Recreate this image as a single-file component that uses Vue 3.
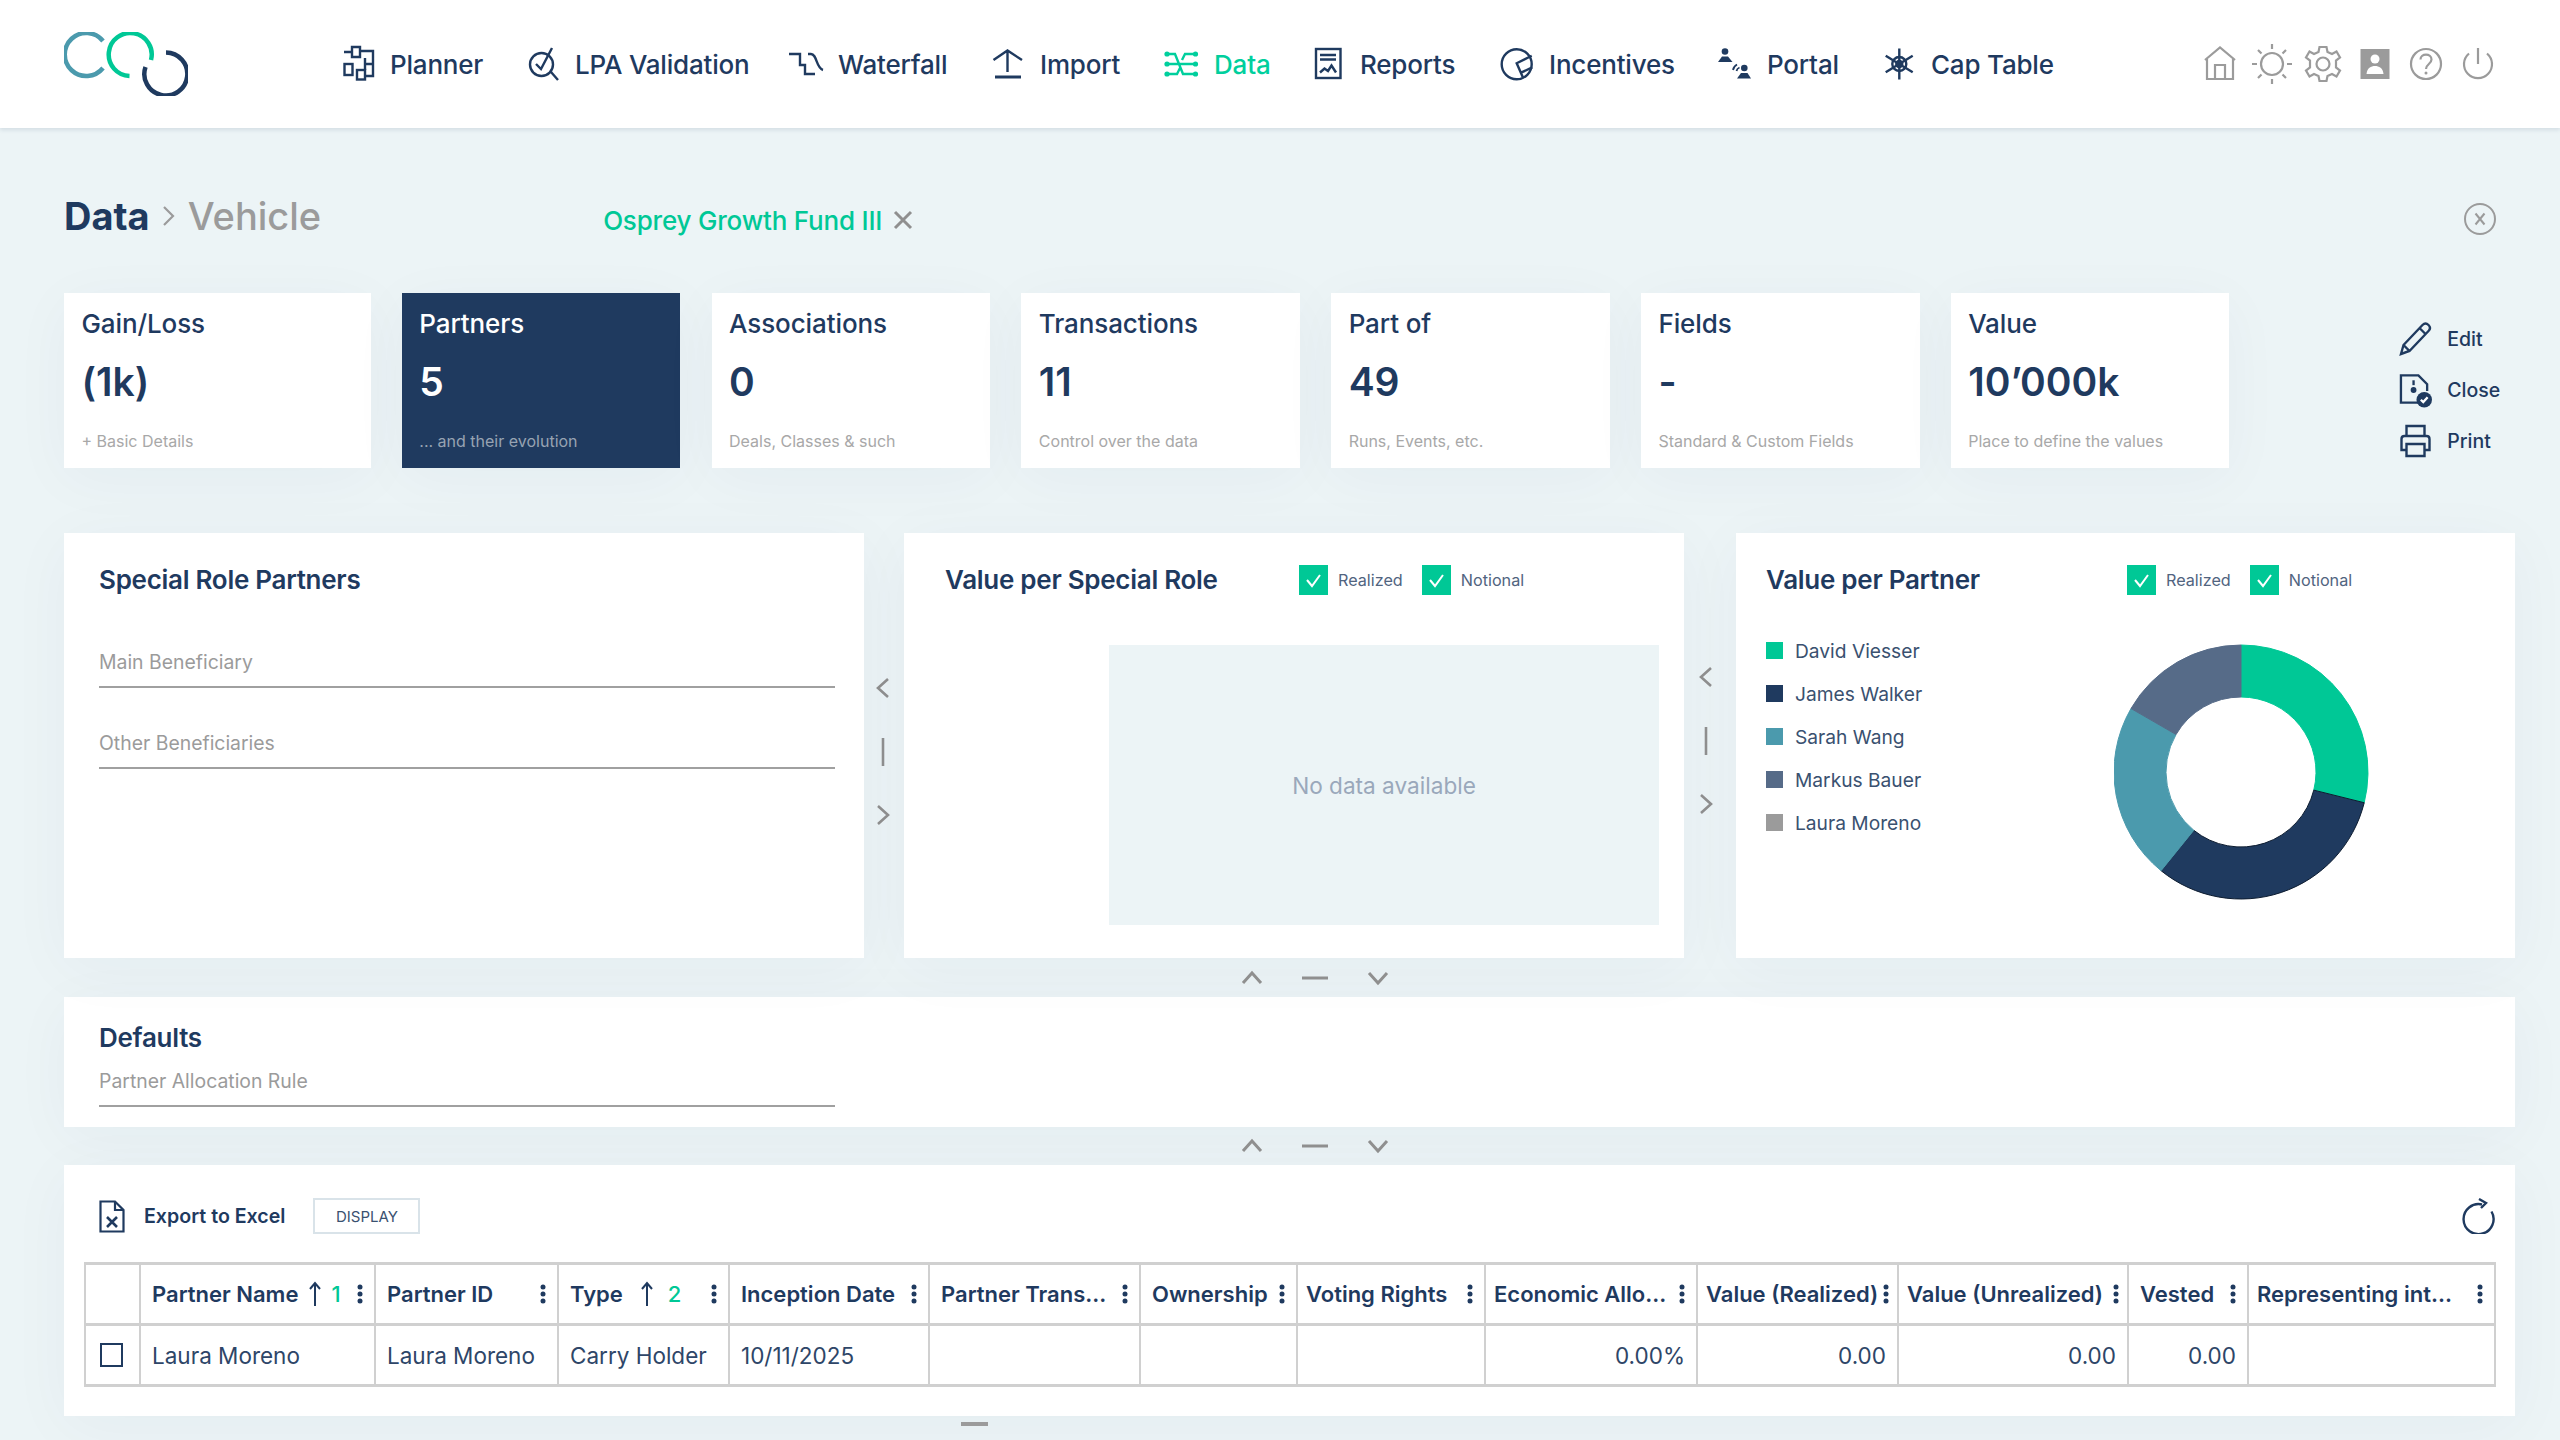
<script setup>
import { computed } from 'vue'

const navy = '#1f3a5f'

const navItems = [
  { label: 'Planner' },
  { label: 'LPA Validation' },
  { label: 'Waterfall' },
  { label: 'Import' },
  { label: 'Data', active: true },
  { label: 'Reports' },
  { label: 'Incentives' },
  { label: 'Portal' },
  { label: 'Cap Table' }
]

const kpis = [
  { title: 'Gain/Loss', value: '(1k)', sub: '+ Basic Details' },
  { title: 'Partners', value: '5', sub: '... and their evolution', active: true },
  { title: 'Associations', value: '0', sub: 'Deals, Classes & such' },
  { title: 'Transactions', value: '11', sub: 'Control over the data' },
  { title: 'Part of', value: '49', sub: 'Runs, Events, etc.' },
  { title: 'Fields', value: '-', sub: 'Standard & Custom Fields' },
  { title: 'Value', value: "10’000k", sub: 'Place to define the values' }
]

const partners = [
  { name: 'David Viesser', color: '#00c896', from: 0, to: 104 },
  { name: 'James Walker', color: navy, from: 104, to: 219 },
  { name: 'Sarah Wang', color: '#4b9aad', from: 219, to: 300 },
  { name: 'Markus Bauer', color: '#566b88', from: 300, to: 360 },
  { name: 'Laura Moreno', color: '#9b9b9b' }
]

// Builds the ring segments of the donut from start and end angles
function polar(r, deg) {
  const a = (deg * Math.PI) / 180
  return `${(127 + r * Math.sin(a)).toFixed(2)} ${(128 - r * Math.cos(a)).toFixed(2)}`
}

const slices = computed(() =>
  partners
    .filter((p) => p.to)
    .map((p) => {
      const large = p.to - p.from > 180 ? 1 : 0
      return {
        color: p.color,
        edge: p.color === navy ? '#0d1c30' : p.color,
        d: `M${polar(127, p.from)} A127 127 0 ${large} 1 ${polar(127, p.to)} L${polar(75, p.to)} A75 75 0 ${large} 0 ${polar(75, p.from)} Z`
      }
    })
)

const columns = [
  { label: '', width: 55 },
  { label: 'Partner Name', width: 235, sort: '1' },
  { label: 'Partner ID', width: 183 },
  { label: 'Type', width: 171, sort: '2', cls: 'wide-sort' },
  { label: 'Inception Date', width: 200 },
  { label: 'Partner Trans...', width: 211 },
  { label: 'Ownership', width: 157 },
  { label: 'Voting Rights', width: 188, cls: 'tight-left' },
  { label: 'Economic Allo...', width: 212, cls: 'tight-left' },
  { label: 'Value (Realized)', width: 201, cls: 'tight' },
  { label: 'Value (Unrealized)', width: 230, cls: 'tight' },
  { label: 'Vested', width: 120 },
  { label: 'Representing int...', width: 247, cls: 'tight-left' }
]

const row = [
  { text: 'Laura Moreno' },
  { text: 'Laura Moreno' },
  { text: 'Carry Holder' },
  { text: '10/11/2025' },
  { text: '' },
  { text: '' },
  { text: '' },
  { text: '0.00%', num: true },
  { text: '0.00', num: true },
  { text: '0.00', num: true },
  { text: '0.00', num: true },
  { text: '' }
]
</script>

<template>
  <div class="app">
    <header class="topbar">
      <svg class="logo" width="124" height="64" viewBox="0 0 124 64" fill="none" stroke-width="4.5">
        <path d="M39 9A21.5 21.5 0 1 0 39 36" stroke="#4b9aad" />
        <path d="M65.5 44A21.5 21.5 0 1 1 87 28" stroke="#00c896" />
        <path d="M102 20.5A21.5 21.5 0 1 1 81.5 35" :stroke="navy" />
      </svg>

      <nav class="nav">
        <a v-for="(item, i) in navItems" :key="item.label" class="nav-item" :class="{ active: item.active }">
          <svg class="nav-icon" width="32" height="40" viewBox="0 0 32 40" fill="none" stroke="currentColor" stroke-width="2.4">
            <g v-if="i === 0">
              <path d="M1 8H9M9 3h8v10H9zM17 7H30V32H22M30 20H22V14M22 20v6" />
              <rect x="1.500" y="20" width="8" height="11" />
              <rect x="14" y="26" width="8" height="9.500" />
            </g>
            <g v-else-if="i === 1">
              <circle cx="13.500" cy="20.500" r="11.500" />
              <path d="M8 20L13 25L24 4M23 28L30 36" />
            </g>
            <g v-else-if="i === 2">
              <path d="M-2 10H9V21H14V30H24M17 10H20C26 10 25 24 32 26" />
            </g>
            <g v-else-if="i === 3">
              <path d="M.5 16L14.500 6.500L29 16M14.500 7V28" />
              <path d="M2 33H28" stroke-width="3" />
            </g>
            <g v-else-if="i === 4">
              <path d="M0 10H8L16 30H28M28 10H18L15 16M0 30H10L13 24M0 20H28" />
              <g fill="currentColor" stroke="none">
                <circle cx="0" cy="10" r="2.600" /><circle cx="0" cy="20" r="2.600" /><circle cx="0" cy="30" r="2.600" />
                <circle cx="28.500" cy="10" r="2.600" /><circle cx="28.500" cy="20" r="2.600" /><circle cx="28.500" cy="30" r="2.600" />
              </g>
            </g>
            <g v-else-if="i === 5">
              <rect x="3" y="5" width="24.500" height="29" />
              <path d="M7 11H23M7 15.500H23M7 28.500L11.500 24.500L15 27L18.500 21.500L23 28.500" />
            </g>
            <g v-else-if="i === 6">
              <circle cx="14.700" cy="20.300" r="15" />
              <path d="M29.700 11.700L14.700 19.300L21.300 34.300M19 28.700L30.300 23.300" />
            </g>
            <g v-else-if="i === 7">
              <g fill="currentColor" stroke="none">
                <circle cx="5" cy="7.500" r="3.300" />
                <path d="M-2 18L2 12.500H8L12.500 18z" />
                <circle cx="24.300" cy="24" r="3.300" />
                <path d="M17 34.500L21 29H27.500L31 34.500z" />
              </g>
              <path d="M13 26Q13.500 22.500 17 20.500M16.500 27Q17 24.500 19.500 23.500" stroke-width="1.800" />
            </g>
            <g v-else>
              <circle cx="15.300" cy="20" r="7" />
              <circle cx="15.300" cy="20" r="3" />
              <path d="M15.300 4.500V35.500M1.700 11.700L28.700 28.300M28.700 11.700L1.700 28.300" />
            </g>
          </svg>
          <span>{{ item.label }}</span>
        </a>
      </nav>

      <div class="tools">
        <svg width="40" height="40" viewBox="0 0 40 40" fill="none">
          <path d="M5 16L20 3.500L35 16M7 14V35H33V14M15 35V21H25V35" />
        </svg>
        <svg width="40" height="40" viewBox="0 0 40 40" fill="none">
          <circle cx="20" cy="20" r="11" />
          <path d="M20 0V5M20 35V40M0 20H5M35 20H40M6 6L9.500 9.500M30.500 30.500L34 34M34 6L30.500 9.500M9.500 30.500L6 34" />
        </svg>
        <svg width="40" height="40" viewBox="0 0 40 40" fill="none">
          <path d="M16.500 3H23.500L24.500 8L29 10L33.500 7.500L37 13.500L33 16.500V23.500L37 26.500L33.500 32.500L29 30L24.500 32L23.500 37H16.500L15.500 32L11 30L6.500 32.500L3 26.500L7 23.500V16.500L3 13.500L6.500 7.500L11 10L15.500 8z" />
          <circle cx="20" cy="20" r="6.500" />
        </svg>
        <svg width="40" height="40" viewBox="0 0 40 40">
          <rect x="5.500" y="5" width="29" height="30" fill="#9b9b9b" stroke="none" />
          <circle cx="20" cy="15" r="4.500" fill="#fff" stroke="none" />
          <path d="M11.500 30C12 24 16 22 20 22C24 22 28 24 28.500 30z" fill="#fff" stroke="none" />
        </svg>
        <svg width="40" height="40" viewBox="0 0 40 40" fill="none">
          <circle cx="20" cy="20" r="15" />
          <path d="M14.500 15.500C14.500 9 25.500 9 25.500 15.500C25.500 20 20 20 20 25" />
          <circle cx="20" cy="29" r="1.500" fill="#9b9b9b" stroke="none" />
        </svg>
        <svg width="40" height="40" viewBox="0 0 40 40" fill="none">
          <path d="M11 9.500A14 14 0 1 0 29 9.500M20 4V20" />
        </svg>
      </div>
    </header>

    <main class="page">
      <div class="crumbs">
        <span class="crumb-root">Data</span>
        <svg class="crumb-sep" width="14" height="22" viewBox="0 0 14 22" fill="none"><path d="M2 2L11 11L2 20" /></svg>
        <span class="crumb-leaf">Vehicle</span>
        <span class="fund">Osprey Growth Fund III</span>
        <svg class="fund-x" width="20" height="20" viewBox="0 0 20 20" fill="none"><path d="M2 2L18 18M18 2L2 18" /></svg>
        <svg class="close-round" width="32" height="32" viewBox="0 0 32 32" fill="none">
          <circle cx="16" cy="16" r="15" />
          <path d="M11.500 10.500L20.500 21.500M20.500 10.500L11.500 21.500" />
        </svg>
      </div>

      <section class="kpis">
        <div class="kpi-grid">
          <div v-for="k in kpis" :key="k.title" class="kpi" :class="{ active: k.active }">
            <div class="kpi-title">{{ k.title }}</div>
            <div class="kpi-value">{{ k.value }}</div>
            <div class="kpi-sub">{{ k.sub }}</div>
          </div>
        </div>
        <div class="actions">
          <a class="action">
            <svg width="32" height="36" viewBox="0 0 32 36" fill="none">
              <path d="M1.500 33L4 24L23 4C25 2 27 2 29 4C31 6 31 8 29 10L10 30zM4 24L10 30M20 7L26 13" />
            </svg>
            <span>Edit</span>
          </a>
          <a class="action">
            <svg width="34" height="36" viewBox="0 0 34 36" fill="none">
              <path d="M20 31H2V3H20L29 12V19" />
              <path d="M15 8V13" />
              <circle cx="15" cy="18" r="3" :fill="navy" stroke="none" />
              <circle cx="26" cy="28" r="8" :fill="navy" stroke="none" />
              <path d="M22.500 28L25 30.500L29.500 25.500" stroke="#fff" />
            </svg>
            <span>Close</span>
          </a>
          <a class="action">
            <svg width="32" height="36" viewBox="0 0 32 36" fill="none">
              <path d="M7 13V3H25V13M7 27H2V16C2 14 3 13 5 13H27C29 13 30 14 30 16V27H25M7 21H25V33H7z" />
            </svg>
            <span>Print</span>
          </a>
        </div>
      </section>

      <section class="panels">
        <div class="panel roles">
          <h2 class="panel-title">Special Role Partners</h2>
          <div class="field first">Main Beneficiary</div>
          <div class="field">Other Beneficiaries</div>
        </div>

        <div class="vsplit one">
          <svg width="24" height="28" viewBox="0 0 24 28" fill="none"><path d="M17 5L7 14L17 23" /></svg>
          <svg width="24" height="28" viewBox="0 0 24 28" fill="none"><path d="M12 0V28" /></svg>
          <svg width="24" height="28" viewBox="0 0 24 28" fill="none"><path d="M7 5L17 14L7 23" /></svg>
        </div>

        <div class="panel special">
          <div class="panel-head">
            <h2 class="panel-title">Value per Special Role</h2>
            <div class="checks">
              <label class="check">
                <svg width="29" height="30" viewBox="0 0 29 30"><rect width="29" height="30" fill="#00c896" /><path d="M8 15L13 21L21 10" fill="none" stroke="#fff" stroke-width="2" /></svg>
                <span>Realized</span>
              </label>
              <label class="check">
                <svg width="29" height="30" viewBox="0 0 29 30"><rect width="29" height="30" fill="#00c896" /><path d="M8 15L13 21L21 10" fill="none" stroke="#fff" stroke-width="2" /></svg>
                <span>Notional</span>
              </label>
            </div>
          </div>
          <div class="no-data">No data available</div>
        </div>

        <div class="vsplit two">
          <svg width="24" height="28" viewBox="0 0 24 28" fill="none"><path d="M17 5L7 14L17 23" /></svg>
          <svg width="24" height="28" viewBox="0 0 24 28" fill="none"><path d="M12 0V28" /></svg>
          <svg width="24" height="28" viewBox="0 0 24 28" fill="none"><path d="M7 5L17 14L7 23" /></svg>
        </div>

        <div class="panel per-partner">
          <div class="panel-head">
            <h2 class="panel-title">Value per Partner</h2>
            <div class="checks">
              <label class="check">
                <svg width="29" height="30" viewBox="0 0 29 30"><rect width="29" height="30" fill="#00c896" /><path d="M8 15L13 21L21 10" fill="none" stroke="#fff" stroke-width="2" /></svg>
                <span>Realized</span>
              </label>
              <label class="check">
                <svg width="29" height="30" viewBox="0 0 29 30"><rect width="29" height="30" fill="#00c896" /><path d="M8 15L13 21L21 10" fill="none" stroke="#fff" stroke-width="2" /></svg>
                <span>Notional</span>
              </label>
            </div>
          </div>
          <div class="chart-body">
            <ul class="legend">
              <li v-for="p in partners" :key="p.name">
                <i class="swatch" :style="{ background: p.color }"></i>{{ p.name }}
              </li>
            </ul>
            <svg class="donut" width="256" height="256" viewBox="0 0 256 256">
              <path v-for="s in slices" :key="s.color" :d="s.d" :fill="s.color" :stroke="s.edge" stroke-width="1" />
            </svg>
          </div>
        </div>
      </section>

      <div class="hsplit">
        <svg width="28" height="16" viewBox="0 0 28 16" fill="none"><path d="M5 13L14 3L23 13" /></svg>
        <svg width="28" height="16" viewBox="0 0 28 16" fill="none"><path d="M1 8H27" /></svg>
        <svg width="28" height="16" viewBox="0 0 28 16" fill="none"><path d="M5 3L14 13L23 3" /></svg>
      </div>

      <section class="panel defaults">
        <h2 class="panel-title">Defaults</h2>
        <div class="field">Partner Allocation Rule</div>
      </section>

      <div class="hsplit second">
        <svg width="28" height="16" viewBox="0 0 28 16" fill="none"><path d="M5 13L14 3L23 13" /></svg>
        <svg width="28" height="16" viewBox="0 0 28 16" fill="none"><path d="M1 8H27" /></svg>
        <svg width="28" height="16" viewBox="0 0 28 16" fill="none"><path d="M5 3L14 13L23 3" /></svg>
      </div>

      <section class="panel grid-panel">
        <div class="toolbar">
          <svg class="excel" width="26" height="33" viewBox="0 0 26 33" fill="none" :stroke="navy" stroke-width="2.200">
            <path d="M1.500 1.500H16L24.500 10V31.500H1.500zM16 1.500V10H24.500" />
            <path d="M8 17L18 27M18 17L8 27" stroke-width="2.600" />
          </svg>
          <span class="export">Export to Excel</span>
          <button class="display">DISPLAY</button>
          <svg class="refresh" width="34" height="36" viewBox="0 0 34 36" fill="none" :stroke="navy" stroke-width="2.400">
            <path d="M21 6.500A15 15 0 1 0 30.500 13.500" />
            <path d="M18 1L25 5L20 10" />
          </svg>
        </div>

        <table class="grid">
          <colgroup>
            <col v-for="c in columns" :key="c.label" :style="{ width: c.width + 'px' }" />
          </colgroup>
          <thead>
            <tr>
              <th v-for="c in columns" :key="c.label" :class="c.cls">
                <div v-if="c.label" class="th-inner">
                  <span class="th-label">{{ c.label }}</span>
                  <template v-if="c.sort">
                    <svg class="sort-arrow" width="14" height="26" viewBox="0 0 14 26" fill="none">
                      <path d="M7 25V2M2 8L7 2L12 8" />
                    </svg>
                    <span class="sort-rank">{{ c.sort }}</span>
                  </template>
                  <svg class="kebab" width="6" height="20" viewBox="0 0 6 20"><circle cx="3" cy="3" r="2.500" /><circle cx="3" cy="10" r="2.500" /><circle cx="3" cy="17" r="2.500" /></svg>
                </div>
              </th>
            </tr>
          </thead>
          <tbody>
            <tr>
              <td class="select-cell"><span class="box"></span></td>
              <td v-for="(cell, i) in row" :key="i" :class="{ num: cell.num }">{{ cell.text }}</td>
            </tr>
          </tbody>
        </table>
      </section>

      <div class="grip"><span></span></div>
    </main>
  </div>
</template>

<style>
html,
body {
  margin: 0;
  background: #ecf4f6;
}
</style>

<style scoped>
.app {
  min-height: 1440px;
  width: 2560px;
  overflow: hidden;
  background: #ecf4f6;
  color: #1f3a5f;
  font-family: Inter, "Liberation Sans", sans-serif;
}

.topbar {
  height: 128px;
  box-sizing: border-box;
  padding-left: 64px;
  display: flex;
  align-items: center;
  background: #fff;
  box-shadow: 0 2px 4px rgba(31, 58, 95, 0.12);
  position: relative;
}

.logo {
  flex: none;
}

.nav {
  margin-left: 155px;
  display: grid;
  grid-template-columns: 185px 263px 202px 174px 146px 189px 218px 164px 120px;
}

.nav-item {
  display: flex;
  align-items: center;
  gap: 15px;
  font-size: 26px;
  font-weight: 500;
  letter-spacing: -0.2px;
  color: #1f3a5f;
  white-space: nowrap;
}

.nav-item.active {
  color: #00cf9d;
}

.nav-icon {
  flex: none;
  overflow: visible;
}

.tools {
  margin-left: 196px;
  display: flex;
  gap: 11.5px;
  stroke: #9b9b9b;
  stroke-width: 2.200;
}

.crumbs {
  height: 40px;
  padding: 68px 64px 57px;
  display: flex;
  align-items: center;
}

.crumb-root {
  font-size: 38px;
  font-weight: 700;
}

.crumb-sep {
  margin: 0 12px;
  stroke: #9b9b9b;
  stroke-width: 2.200;
}

.crumb-leaf {
  font-size: 38px;
  font-weight: 500;
  color: #9b9b9b;
}

.fund {
  margin: 8px 0 0 282px;
  font-size: 26px;
  font-weight: 500;
  letter-spacing: -0.2px;
  color: #00c896;
}

.fund-x {
  margin: 8px 0 0 11px;
  stroke: #8f8f8f;
  stroke-width: 3;
}

.close-round {
  margin-left: auto;
  margin-top: 6px;
  stroke: #9b9b9b;
  stroke-width: 2;
}

.kpis {
  display: flex;
  padding-left: 64px;
}

.kpi-grid {
  display: grid;
  grid-template-columns: 306.6px repeat(6, 278.6px);
  gap: 31.2px;
}

.kpi {
  height: 175px;
  box-sizing: border-box;
  padding: 14px 17.5px 0;
  background: #fff;
  box-shadow: 0 10px 60px rgba(31, 58, 95, 0.04);
}

.kpi.active {
  background: #1f3a5f;
  color: #fff;
}

.kpi-title {
  font-size: 26px;
  line-height: 34px;
  font-weight: 500;
  letter-spacing: -0.1px;
}

.kpi-value {
  margin-top: 17px;
  font-size: 39px;
  line-height: 48px;
  font-weight: 600;
}

.kpi-sub {
  margin-top: 25px;
  font-size: 16px;
  line-height: 20px;
  color: #a8a8a8;
}

.kpi.active .kpi-sub {
  color: #97a3b2;
}

.actions {
  margin-left: 170px;
  padding-top: 20px;
  display: flex;
  flex-direction: column;
}

.action {
  height: 51px;
  display: flex;
  align-items: center;
  gap: 15px;
  font-size: 19.5px;
  font-weight: 500;
  stroke: #1f3a5f;
  stroke-width: 2.400;
}

.action svg {
  flex: none;
  width: 33px;
}

.panels {
  margin-top: 65px;
  padding-left: 64px;
  display: grid;
  grid-template-columns: 800px 40px 780px 52px 779px;
  height: 425px;
}

.panel {
  background: #fff;
  box-sizing: border-box;
  box-shadow: 0 10px 60px rgba(31, 58, 95, 0.04);
}

.panel-title {
  margin: 0;
  font-size: 26px;
  line-height: 34px;
  font-weight: 600;
  letter-spacing: -0.28px;
  white-space: nowrap;
}

.field {
  width: 736px;
  box-sizing: border-box;
  padding-bottom: 11px;
  margin-top: 42px;
  font-size: 19.4px;
  line-height: 26px;
  color: #9b9b9b;
  border-bottom: 2px solid #a0a0a0;
}

.field.first {
  margin-top: 52px;
}

.roles {
  padding: 30px 0 0 35px;
}

.special {
  padding: 30px 25px 0 41px;
}

.per-partner {
  padding: 30px 0 0 30px;
}

.panel-head {
  display: flex;
  align-items: center;
}

.special .panel-title {
  width: 354px;
}

.per-partner .panel-title {
  width: 361px;
}

.checks {
  display: flex;
  gap: 19px;
}

.check {
  display: flex;
  align-items: center;
  gap: 10px;
  font-size: 16.2px;
  color: #51647f;
}

.no-data {
  margin: 48px 0 0 164px;
  height: 280px;
  display: flex;
  align-items: center;
  justify-content: center;
  background: #ecf4f6;
  font-size: 22.6px;
  color: #9aa8bb;
}

.chart-body {
  display: flex;
  align-items: flex-start;
  margin-top: 32px;
}

.legend {
  margin: 0;
  padding: 0;
  width: 348px;
  list-style: none;
}

.legend li {
  height: 43px;
  display: flex;
  align-items: center;
  gap: 12px;
  font-size: 19.2px;
  color: #3a5170;
}

.swatch {
  width: 17px;
  height: 17px;
}

.donut {
  margin-top: 15px;
}

.vsplit {
  display: flex;
  flex-direction: column;
  align-items: center;
  gap: 35.5px;
  stroke: #8f8f8f;
  stroke-width: 2.600;
}

.vsplit.one {
  padding-top: 141px;
  margin-left: -2px;
}

.vsplit.two {
  padding-top: 130px;
  margin-left: -9px;
}

.hsplit {
  height: 39px;
  padding-left: 1238px;
  display: flex;
  align-items: center;
  gap: 35px;
  stroke: #8f8f8f;
  stroke-width: 3;
}

.hsplit.second {
  height: 38px;
}

.defaults {
  margin-left: 64px;
  width: 2451px;
  height: 130px;
  padding: 24px 0 0 35px;
}

.defaults .field {
  margin-top: 13px;
}

.grid-panel {
  margin-left: 64px;
  width: 2451px;
  height: 251px;
  padding: 5px 20px 0;
}

.toolbar {
  height: 92px;
  display: flex;
  align-items: center;
}

.excel {
  margin-left: 15px;
}

.export {
  margin-left: 19px;
  font-size: 19.6px;
  font-weight: 600;
}

.display {
  margin-left: 28px;
  width: 107px;
  height: 36px;
  box-sizing: border-box;
  background: #fff;
  border: 2px solid #d9e3e9;
  font-family: inherit;
  font-size: 15px;
  color: #3a5170;
}

.refresh {
  margin-left: auto;
}

.grid {
  width: 2410px;
  table-layout: fixed;
  border-collapse: collapse;
  font-size: 22.5px;
}

.grid th,
.grid td {
  border: 2px solid #d0d0d0;
  padding: 0 11px;
  text-align: left;
  white-space: nowrap;
}

.grid th {
  height: 58px;
  border-top-width: 3px;
  border-bottom-width: 3px;
  font-size: 22px;
  font-weight: 600;
}

.grid th.tight-left {
  padding-left: 8px;
}

.grid th.tight {
  padding: 0 8px;
}

.grid td {
  height: 58px;
  font-weight: 400;
  color: #2e4668;
  border-bottom-width: 3px;
}

.grid td.num {
  text-align: right;
}

.grid td.select-cell {
  padding: 0 0 0 14px;
}

.box {
  display: block;
  width: 23px;
  height: 24px;
  box-sizing: border-box;
  border: 2px solid #1f3a5f;
}

.th-inner {
  display: flex;
  align-items: center;
}

.sort-arrow {
  margin-left: 10px;
  stroke: #1f3a5f;
  stroke-width: 2;
}

.sort-rank {
  margin-left: 9px;
  color: #00c896;
  font-weight: 500;
}

.wide-sort .sort-arrow {
  margin-left: 17px;
}

.wide-sort .sort-rank {
  margin-left: 14px;
}

.kebab {
  margin-left: auto;
  flex: none;
  fill: #1f3a5f;
}

.grip {
  padding: 6px 0 0 961px;
}

.grip span {
  display: block;
  width: 27px;
  height: 4px;
  background: #9b9b9b;
}
</style>
